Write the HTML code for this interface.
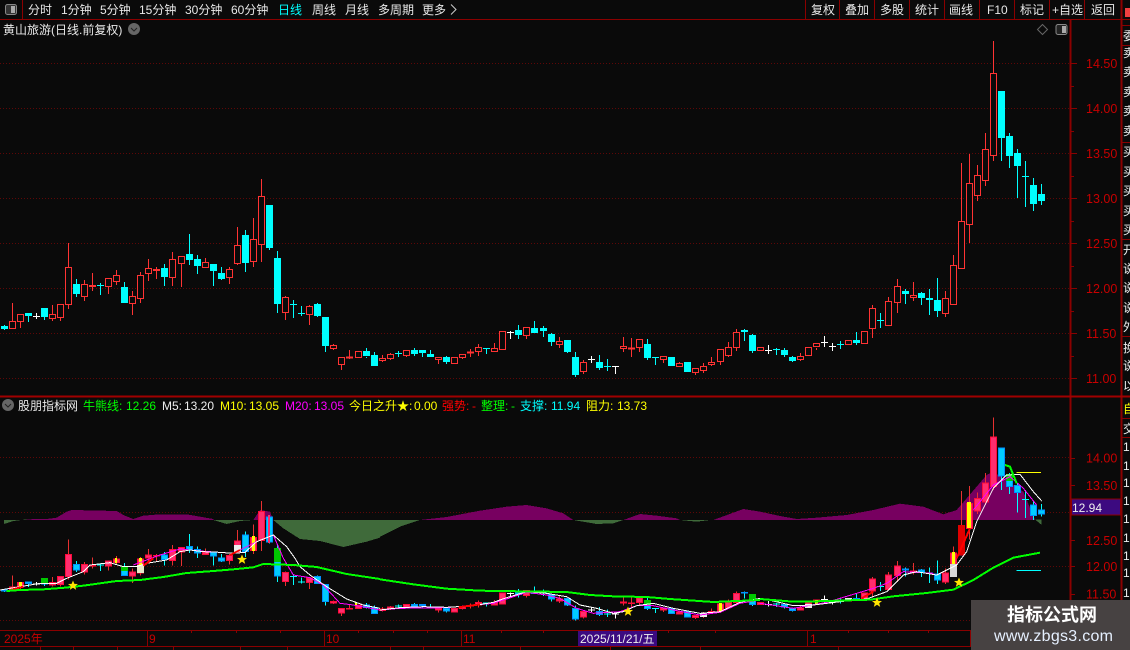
<!DOCTYPE html>
<html lang="zh">
<head>
<meta charset="utf-8">
<title>黄山旅游</title>
<style>
html,body{margin:0;padding:0;background:#0a0a0a;width:1130px;height:650px;overflow:hidden}
svg{display:block;position:absolute;left:0;top:0}
text{font-family:"Liberation Sans","WenQuanYi Zen Hei","Noto Sans CJK SC",sans-serif;font-size:12px;white-space:pre}
.n{fill:#e8e8e8}
.a{fill:#c80000;font-size:12.5px}
.d{stroke:#5e0707;stroke-width:1;stroke-dasharray:1 2;fill:none}
.s{stroke:#8b0000;stroke-width:1;fill:none}
.ln{fill:none;vector-effect:non-scaling-stroke;shape-rendering:crispEdges}
.c{vector-effect:non-scaling-stroke}
g[transform] polygon{shape-rendering:crispEdges}
</style>
</head>
<body>
<svg width="1130" height="650" viewBox="0 0 1130 650" xmlns="http://www.w3.org/2000/svg">
<defs>
<path id="rw" class="c" d="M12.5 303V321M20.5 322V328M52.5 305V314M52.5 319V321M60.5 318V321M68.5 243V267M68.5 305V309M84.5 280V284M84.5 297V301M92.5 273V291M108.5 287V294M116.5 270V275M116.5 282V285M132.5 291V296M132.5 304V315M140.5 272V275M140.5 299V303M148.5 259V268M148.5 274V281M156.5 267V279M172.5 252V259M172.5 278V286M181.5 264V287M205.5 258V262M229.5 267V269M229.5 278V284M237.5 227V245M237.5 264V265M253.5 218V239M253.5 262V267M261.5 179V196M261.5 245V262M285.5 296V297M285.5 313V320M309.5 305V306M309.5 315V325M333.5 344V345M333.5 349V350M341.5 365V370M349.5 350V359M382.5 355V358M382.5 361V362M390.5 353V354M390.5 359V360M406.5 355V357M438.5 360V364M462.5 358V359M470.5 349V357M478.5 344V347M478.5 352V356M494.5 343V348M526.5 336V339M559.5 337V341M559.5 345V348M583.5 360V362M583.5 372V374M623.5 337V346M623.5 349V352M631.5 338V357M639.5 347V352M663.5 359V363M679.5 362V363M695.5 373V375M703.5 363V366M703.5 371V373M711.5 357V362M711.5 364V366M720.5 362V365M728.5 342V347M728.5 356V357M736.5 329V332M736.5 348V351M800.5 353V356M800.5 360V361M816.5 348V350M872.5 305V308M872.5 329V338M888.5 297V301M897.5 279V286M897.5 303V313M913.5 282V295M913.5 298V301M945.5 291V298M945.5 314V317M953.5 255V265M961.5 163V221M969.5 154V183M969.5 225V243M977.5 165V175M977.5 196V201M985.5 133V149M985.5 181V186M993.5 41V73M993.5 156V161"/>
<path id="rb" class="c" d="M9.5 321.5h6v7h-6zM17.5 314.5h6v7h-6zM49.5 314.5h6v4h-6zM57.5 304.5h6v13h-6zM65.5 267.5h6v37h-6zM81.5 284.5h6v12h-6zM89.5 285.5h6v1h-6zM105.5 278.5h6v8h-6zM113.5 275.5h6v6h-6zM129.5 296.5h6v7h-6zM137.5 275.5h6v23h-6zM145.5 268.5h6v5h-6zM153.5 269.5h6v1h-6zM169.5 259.5h6v18h-6zM178.5 256.5h6v7h-6zM202.5 262.5h6v5h-6zM226.5 269.5h6v8h-6zM234.5 245.5h6v18h-6zM250.5 239.5h6v22h-6zM258.5 196.5h6v48h-6zM282.5 297.5h6v15h-6zM306.5 306.5h6v8h-6zM330.5 345.5h6v3h-6zM338.5 357.5h6v7h-6zM346.5 357h6v1h-6zM355.5 351.5h6v6h-6zM379.5 358.5h6v2h-6zM387.5 354.5h6v4h-6zM403.5 350.5h6v5h-6zM435.5 357.5h6v2h-6zM451.5 357.5h6v6h-6zM459.5 354.5h6v3h-6zM467.5 352h6v1h-6zM475.5 347.5h6v4h-6zM491.5 348.5h6v3h-6zM499.5 331.5h6v18h-6zM523.5 327.5h6v8h-6zM556.5 341.5h6v3h-6zM580.5 362.5h6v9h-6zM620.5 346.5h6v2h-6zM628.5 348h6v1h-6zM636.5 339.5h6v8h-6zM660.5 356.5h6v3h-6zM676.5 363.5h6v3h-6zM692.5 368.5h6v4h-6zM700.5 366.5h6v4h-6zM708.5 362.5h6v2h-6zM717.5 349.5h6v12h-6zM725.5 347.5h6v8h-6zM733.5 332.5h6v15h-6zM757.5 347.5h6v3h-6zM797.5 356.5h6v3h-6zM805.5 347.5h6v8h-6zM813.5 343.5h6v3h-6zM845.5 340.5h6v4h-6zM861.5 331.5h6v12h-6zM869.5 308.5h6v20h-6zM885.5 301.5h6v24h-6zM894.5 286.5h6v16h-6zM910.5 295.5h6v2h-6zM942.5 298.5h6v15h-6zM950.5 265.5h6v39h-6zM958.5 221.5h6v47h-6zM966.5 183.5h6v41h-6zM974.5 175.5h6v20h-6zM982.5 149.5h6v31h-6zM990.5 73.5h6v82h-6z"/>
<path id="cw" class="c" d="M4.5 325V330M28.5 316V322M44.5 317V320M76.5 279V284M76.5 294V297M100.5 283V295M97 285.5h7M124.5 282V287M164.5 264V268M164.5 277V286M189.5 234V254M189.5 259V265M197.5 255V259M197.5 266V274M213.5 271V286M221.5 267V273M221.5 279V280M245.5 230V235M245.5 263V272M269.5 248V250M277.5 251V258M277.5 304V313M293.5 300V318M290 304.5h7M301.5 306V316M298 313.5h7M317.5 303V304M317.5 316V317M325.5 346V352M366.5 348V351M366.5 357V358M374.5 352V355M398.5 351V357M395 353.5h7M414.5 348V350M414.5 354V356M422.5 350V351M422.5 353V357M430.5 350V354M446.5 356V357M446.5 362V364M486.5 348V354M483 348.5h7M518.5 325V330M518.5 335V339M534.5 321V328M543.5 326V328M543.5 331V337M551.5 333V334M551.5 342V346M567.5 352V353M575.5 352V357M575.5 375V377M599.5 355V362M599.5 368V370M607.5 359V371M604 366.5h7M647.5 339V344M647.5 358V360M655.5 357V365M652 357.5h7M744.5 329V341M752.5 334V335M752.5 351V353M776.5 348V355M773 349.5h7M784.5 348V350M784.5 355V357M792.5 356V357M792.5 361V362M840.5 341V349M837 344.5h7M856.5 332V340M856.5 343V345M880.5 313V328M877 320.5h7M905.5 289V292M905.5 294V304M921.5 292V293M921.5 298V305M929.5 289V298M929.5 300V315M937.5 278V300M937.5 311V317M1001.5 138V161M1009.5 133V136M1009.5 156V168M1017.5 149V153M1017.5 166V198M1025.5 161V207M1022 176.5h7M1033.5 178V185M1033.5 204V211M1041.5 184V194M1041.5 201V205"/>
<path id="cb" class="c" d="M1.5 326.5h6v2h-6zM25.5 313.5h6v2h-6zM41.5 308.5h6v8h-6zM73.5 284.5h6v9h-6zM121.5 287.5h6v15h-6zM161.5 268.5h6v8h-6zM186.5 254.5h6v5h-6zM194.5 259.5h6v6h-6zM210.5 264.5h6v6h-6zM218.5 273.5h6v5h-6zM242.5 235.5h6v27h-6zM266.5 205.5h6v42h-6zM274.5 258.5h6v45h-6zM314.5 304.5h6v11h-6zM322.5 317.5h6v28h-6zM363.5 351.5h6v4h-6zM371.5 355.5h6v10h-6zM411.5 350.5h6v3h-6zM419.5 350.5h6v2h-6zM427.5 354.5h6v2h-6zM443.5 357.5h6v4h-6zM515.5 330.5h6v4h-6zM531.5 328.5h6v4h-6zM540.5 328.5h6v2h-6zM548.5 334.5h6v7h-6zM564.5 340.5h6v11h-6zM572.5 357.5h6v17h-6zM596.5 362.5h6v5h-6zM644.5 344.5h6v13h-6zM668.5 357.5h6v8h-6zM684.5 362.5h6v9h-6zM741.5 330.5h6v1h-6zM749.5 335.5h6v15h-6zM781.5 350.5h6v4h-6zM789.5 357.5h6v3h-6zM853.5 340.5h6v2h-6zM902.5 291.5h6v2h-6zM918.5 293.5h6v4h-6zM926.5 298.5h6v1h-6zM934.5 300.5h6v10h-6zM998.5 91.5h6v46h-6zM1006.5 136.5h6v19h-6zM1014.5 153.5h6v12h-6zM1030.5 185.5h6v18h-6zM1038.5 194.5h6v6h-6z"/>
<path id="ww" class="c" d="M36.5 313V319M33 316.5h7M510.5 331V339M507 332.5h7M591.5 356V363M588 359.5h7M615.5 366V374M612 366.5h7M768.5 345V354M765 350.5h7M824.5 336V347M821 342.5h7M832.5 343V351M829 346.5h7"/>
<polygon id="star" points="0,-5 1.4,-1.6 5,-1.5 2.2,.8 3.2,4.4 0,2.3 -3.2,4.4 -2.2,.8 -5,-1.5 -1.4,-1.6"/>
</defs>

<rect width="1130" height="650" fill="#0a0a0a"/>

<!-- top nav -->
<path class="s" shape-rendering="crispEdges" d="M0 19.5H1130M22.5 0V19M805.5 0V19M839.5 0V19M874.5 0V19M909.5 0V19M944.5 0V19M979.5 0V19M1014.5 0V19M1049.5 0V19M1084.5 0V19M1121.5 0V19"/>
<rect x="5.5" y="4.5" width="11" height="10" rx="2" fill="#333" stroke="#888"/><rect x="11" y="6" width="4" height="7" fill="#aaa"/>
<text class="n" x="28" y="14">分时</text>
<text class="n" x="61" y="14">1分钟</text>
<text class="n" x="100" y="14">5分钟</text>
<text class="n" x="139" y="14">15分钟</text>
<text class="n" x="185" y="14">30分钟</text>
<text class="n" x="231" y="14">60分钟</text>
<text x="278" y="14" fill="#00ffff">日线</text>
<text class="n" x="312" y="14">周线</text>
<text class="n" x="345" y="14">月线</text>
<text class="n" x="378" y="14">多周期</text>
<text class="n" x="422" y="14">更多</text>
<path d="M451 4.5L456 9.5L451 14.5" fill="none" stroke="#ccc"/>
<text class="n" x="811" y="14">复权</text>
<text class="n" x="845" y="14">叠加</text>
<text class="n" x="880" y="14">多股</text>
<text class="n" x="915" y="14">统计</text>
<text class="n" x="949" y="14">画线</text>
<text class="n" x="987" y="14">F10</text>
<text class="n" x="1020" y="14">标记</text>
<text class="n" x="1052" y="14">+自选</text>
<text class="n" x="1091" y="14">返回</text>
<rect x="1125" y="8" width="5" height="9" fill="#f04040"/>

<!-- upper header -->
<text class="n" x="3" y="34">黄山旅游(日线.前复权)</text>
<circle cx="134" cy="29" r="6" fill="#666"/><path d="M131 28l3 3 3-3" fill="none" stroke="#222"/>
<path d="M1042.5 24.5l5 5-5 5-5-5z" fill="none" stroke="#666"/>
<rect x="1056" y="24.5" width="11" height="10" rx="2" fill="#222" stroke="#888"/><rect x="1062" y="26" width="4" height="7" fill="#aaa"/>

<!-- dotted grids -->
<g class="d" shape-rendering="crispEdges">
<path d="M0 63.5H1070M0 108.5H1070M0 153.5H1070M0 198.5H1070M0 243.5H1070M0 288.5H1070M0 333.5H1070M0 378.5H1070M0 457.5H1070M0 512.5H1070M0 566.5H1070M0 620.5H1070"/>
</g>

<!-- upper candles -->
<g shape-rendering="crispEdges" fill="none" stroke-width="1">
<use href="#rw" stroke="#ff3333"/>
<use href="#rb" stroke="#ff3333" fill="#0a0a0a"/>
<use href="#cw" stroke="#00ffff"/>
<use href="#cb" stroke="#00ffff" fill="#00ffff"/>
<use href="#ww" stroke="#ffffff"/>
</g>

<!-- panel lines -->
<path shape-rendering="crispEdges" d="M0 396.5H1130" stroke="#a00000" stroke-width="2" fill="none"/>

<!-- indicator header -->
<circle cx="8" cy="405" r="6" fill="#666"/><path d="M5 404l3 3 3-3" fill="none" stroke="#222"/>
<text class="n" x="18" y="410">股朋指标网</text>
<text x="83" y="410" fill="#00ff00">牛熊线:</text><text x="126" y="410" fill="#00ff00">12.26</text>
<text x="162" y="410" fill="#eee">M5:</text><text x="184" y="410" fill="#eee">13.20</text>
<text x="220" y="410" fill="#ffff00">M10:</text><text x="249" y="410" fill="#ffff00">13.05</text>
<text x="285" y="410" fill="#ff00ff">M20:</text><text x="314" y="410" fill="#ff00ff">13.05</text>
<text x="349" y="410" fill="#ffff00">今日之升★:</text><text x="414" y="410" fill="#ffff00">0.00</text>
<text x="442" y="410" fill="#ff0000">强势:</text><text x="472" y="410" fill="#ff0000">-</text>
<text x="481" y="410" fill="#00ff00">整理:</text><text x="511" y="410" fill="#00ff00">-</text>
<text x="520" y="410" fill="#00ffff">支撑:</text><text x="551" y="410" fill="#00ffff">11.94</text>
<text x="586" y="410" fill="#ffff00">阻力:</text><text x="617" y="410" fill="#ffff00">13.73</text>

<!-- area histogram -->
<g transform="translate(0 395) scale(.33333)">
<polygon fill="#3f6a3a" points="12,375 12,387 40,378 80,373 80,375"/>
<polygon fill="#770060" points="80,375 80,373 140,372 170,368 200,350 215,345 350,348 370,360 400,372 430,362 480,358 560,358 640,372 640,375"/>
<polygon fill="#3f6a3a" points="640,375 680,387 720,378 760,375"/>
<polygon fill="#770060" points="760,375 780,345 810,350 820,375"/>
<polygon fill="#3f6a3a" points="820,375 850,400 900,432 960,438 1030,456 1100,440 1140,428 1140,375"/>
</g>
<g transform="translate(380 395) scale(.33333)">
<polygon fill="#3f6a3a" points="0,375 0,425 60,395 120,375"/>
<polygon fill="#770060" points="120,375 200,366 300,347 380,335 440,330 500,340 550,355 580,375"/>
<polygon fill="#3f6a3a" points="580,375 650,387 700,385 730,375"/>
<polygon fill="#770060" points="730,375 780,357 830,362 890,370 900,375"/>
<polygon fill="#3f6a3a" points="900,375 950,380 990,375"/>
<polygon fill="#770060" points="1000,375 1090,342 1140,350 1140,375"/>
</g>
<g transform="translate(760 395) scale(.33333)">
<polygon fill="#770060" points="0,375 0,350 60,363 110,372 170,368 260,360 340,345 420,326 490,335 550,358 590,345 680,240 700,230 790,290 825,375"/>
<polygon fill="#3f6a3a" points="825,373 845,373 845,390"/>
</g>

<!-- lower candles -->
<g shape-rendering="crispEdges" fill="none" transform="translate(0 392.8) scale(1 .6037)">
<use href="#rw" stroke="#e83030"/>
<use href="#cw" stroke="#00ffff"/>
<use href="#ww" stroke="#ffffff"/>
<use href="#rb" stroke="#ff0a3a" fill="#ff2d6e"/>
<use href="#cb" stroke="#0090ff" fill="#00ccff"/>
</g>

<!-- candle colour overlays -->
<g shape-rendering="crispEdges">
<rect x="19" y="582" width="3" height="5" fill="#ffff00"/>
<rect x="41" y="578" width="7" height="5" fill="#00c800"/>
<rect x="121" y="566" width="7" height="5" fill="#00c800"/>
<rect x="139" y="558" width="3" height="7" fill="#ffff00"/>
<rect x="137" y="565" width="7" height="8" fill="#e8e8c8"/>
<rect x="115" y="558" width="2" height="5" fill="#ffff00"/>
<rect x="234" y="545" width="7" height="7" fill="#eeeeee"/>
<rect x="252" y="536" width="3" height="15" fill="#ffff00"/>
<rect x="274" y="548" width="7" height="14" fill="#00c800"/>
<rect x="268" y="515" width="2" height="28" fill="#ff2d6e"/>
<rect x="355" y="602" width="2" height="4" fill="#ffff00"/>
<rect x="719" y="603" width="3" height="8" fill="#ffff00"/>
<rect x="749" y="594" width="7" height="6" fill="#00c800"/>
<rect x="644" y="600" width="7" height="5" fill="#00c800"/>
<rect x="700" y="613" width="7" height="4" fill="#eeeeee"/>
<rect x="805" y="604" width="7" height="4" fill="#eeeeee"/>
<rect x="815" y="600" width="3" height="4" fill="#ffff00"/>
<rect x="845" y="598" width="7" height="2" fill="#eeeeee"/>
<rect x="952" y="552" width="3" height="12" fill="#ffff00"/>
<rect x="950" y="564" width="7" height="13" fill="#d8d8d8"/>
<rect x="958" y="525" width="7" height="30" fill="#e00000"/>
<rect x="967" y="502" width="4" height="26" fill="#ffff00"/>
<rect x="1006" y="474" width="7" height="7" fill="#00c800"/>
</g>

<!-- lines -->
<g transform="translate(0 395) scale(.33333)">
<polyline class="ln" stroke="#ff00ff" stroke-width="1" points="400,510 440,495 480,480 540,462 600,468 700,475 770,440 820,420 850,490 880,540 930,548 970,570 1020,625 1060,630 1140,645"/>
<polyline class="ln" stroke="#ffffff" stroke-width="1" points="0,585 60,575 120,565 170,565 200,550 250,530 270,510 330,503 370,515 410,515 440,505 500,495 540,470 570,465 610,470 660,472 700,475 735,472 770,440 820,420 860,455 885,490 900,515 930,540 980,575 1040,612 1090,630 1140,640"/>
<polyline class="ln" stroke="#ff0000" stroke-width="2" points="30,585 70,575"/>
<polyline class="ln" stroke="#ff0000" stroke-width="2" points="430,512 460,490"/>
<polyline class="ln" stroke="#ff0000" stroke-width="2" points="690,480 720,465"/>
<polyline class="ln" stroke="#00ff00" stroke-width="2" points="20,588 60,585 130,583 195,578 250,572 300,565 350,558 420,555 490,546 560,534 640,528 700,523 760,517 790,507 880,510 950,516 1040,537 1140,552"/>
</g>
<g transform="translate(380 395) scale(.33333)">
<polyline class="ln" stroke="#ff00ff" stroke-width="1" points="0,645 60,640 200,638 340,625 440,592 500,600 540,610 590,640 640,655 720,650 770,632 820,632 880,645 960,660 1020,652 1080,625 1140,615"/>
<polyline class="ln" stroke="#ffffff" stroke-width="1" points="0,645 60,638 130,635 200,637 280,632 340,622 380,608 440,590 500,595 560,605 600,630 650,640 700,655 730,650 770,632 820,625 880,640 960,655 1020,650 1080,622 1140,610"/>
<polyline class="ln" stroke="#ff0000" stroke-width="2" points="235,637 300,628"/>
<polyline class="ln" stroke="#00ff00" stroke-width="2" points="0,553 100,568 200,581 300,587 420,589 560,591 630,600 700,604 800,606 870,612 1000,621 1140,615"/>
</g>
<g transform="translate(760 395) scale(.33333)">
<polyline class="ln" stroke="#ff00ff" stroke-width="1" points="0,625 100,640 200,622 340,580 380,565 430,530 520,535"/>
<polyline class="ln" stroke="#ff00ff" stroke-width="1" points="640,345 700,270 750,245 790,280 830,330"/>
<polyline class="ln" stroke="#ffffff" stroke-width="1" points="0,610 40,618 100,632 160,630 240,620 320,612 380,590 430,540 470,530 530,540 590,510 620,470 650,380 700,280 740,240 780,238 820,290 845,318"/>
<polyline class="ln" stroke="#ff0000" stroke-width="2" points="305,610 340,590"/>
<polyline class="ln" stroke="#ff0000" stroke-width="2" points="590,490 630,400"/>
<polyline class="ln" stroke="#00ff00" stroke-width="2" points="0,612 100,620 135,620 330,614 400,604 500,594 580,584 640,555 700,518 760,488 840,473"/>
<polyline class="ln" stroke="#00ff00" stroke-width="2" points="735,210 750,215 770,265"/>
<polyline class="ln" stroke="#ffff00" stroke-width="1" points="770,232 843,232"/>
<polyline class="ln" stroke="#00ffff" stroke-width="1" points="770,526 843,526"/>
</g>
<g fill="#ffe400">
<use href="#star" x="73" y="585.5"/>
<use href="#star" x="242" y="559.5"/>
<use href="#star" x="628" y="611.5"/>
<use href="#star" x="877" y="602.5"/>
<use href="#star" x="959" y="582.5"/>
</g>

<!-- bottom time axis -->
<rect x="0" y="631" width="1121" height="15" fill="#0a0a0a"/>
<path class="s" shape-rendering="crispEdges" d="M0 630.5H1121M0 646.5H1121M147.5 631V646M324.5 631V646M461.5 631V646M807.5 631V646M970.5 631V646M191.5 631V633M236.5 631V633M280.5 631V633M358.5 631V633M393.5 631V633M427.5 631V633M501.5 631V633M543.5 631V633M668.5 631V633M715.5 631V633M848.5 631V633M888.5 631V633M928.5 631V633M40.5 647V650M73.5 647V650M117.5 647V650M173.5 647V650M240.5 647V650M287.5 647V650M390.5 647V650M423.5 647V650M520.5 647V650M610.5 647V650M700.5 647V650M838.5 647V650"/>
<text x="4" y="643" fill="#c80000">2025年</text>
<text x="149" y="643" fill="#c80000">9</text>
<text x="326" y="643" fill="#c80000">10</text>
<text x="463" y="643" fill="#c80000">11</text>
<text x="810" y="643" fill="#c80000">1</text>
<rect x="578" y="631" width="79" height="15" fill="#3c0a80"/>
<text x="580" y="643" fill="#eee">2025/11/21/五</text>

<!-- price axis -->
<rect x="1072" y="20" width="49" height="630" fill="#0a0a0a"/>
<path d="M1070.5 20V650" stroke="#8b0000" stroke-width="2" fill="none" shape-rendering="crispEdges"/>
<path d="M1121.5 0V650" stroke="#8b0000" stroke-width="2" fill="none" shape-rendering="crispEdges"/>
<path class="s" shape-rendering="crispEdges" d="M1071 63.5h6M1071 86.5h3M1071 108.5h6M1071 131.5h3M1071 153.5h6M1071 176.5h3M1071 198.5h6M1071 221.5h3M1071 243.5h6M1071 266.5h3M1071 288.5h6M1071 311.5h3M1071 333.5h6M1071 356.5h3M1071 378.5h6M1071 458.5h4M1071 485.5h4M1071 540.5h4M1071 566.5h4M1071 594.5h4"/>
<path d="M0 396.5H1130" stroke="#a00000" stroke-width="2" fill="none" shape-rendering="crispEdges"/>
<text class="a" x="1086" y="68">14.50</text>
<text class="a" x="1086" y="113">14.00</text>
<text class="a" x="1086" y="158">13.50</text>
<text class="a" x="1086" y="203">13.00</text>
<text class="a" x="1086" y="248">12.50</text>
<text class="a" x="1086" y="293">12.00</text>
<text class="a" x="1086" y="338">11.50</text>
<text class="a" x="1086" y="383">11.00</text>
<text class="a" x="1086" y="462.500">14.00</text>
<text class="a" x="1086" y="490">13.50</text>
<text class="a" x="1086" y="545">12.50</text>
<text class="a" x="1086" y="571">12.00</text>
<text class="a" x="1086" y="598.500">11.50</text>
<rect x="1071.500" y="499" width="49" height="16" fill="#3c0a80" stroke="#8b0000"/>
<text x="1072" y="512" fill="#eee">12.94</text>

<!-- right clipped strip -->
<svg x="1122" y="20" width="8" height="630" viewBox="1122 20 8 630">
<g fill="#eee">
<text x="1123" y="40">委</text>
<text x="1123" y="57">卖</text><text x="1123" y="76">卖</text><text x="1123" y="96">卖</text><text x="1123" y="115">卖</text><text x="1123" y="135">卖</text>
<text x="1123" y="156">买</text><text x="1123" y="176">买</text><text x="1123" y="195">买</text><text x="1123" y="215">买</text><text x="1123" y="234">买</text>
<text x="1123" y="254">开</text><text x="1123" y="273">说</text><text x="1123" y="292">说</text><text x="1123" y="312">说</text><text x="1123" y="331">外</text>
<text x="1123" y="352">换</text><text x="1123" y="370">说</text><text x="1123" y="390">以</text>
<text x="1123" y="413" fill="#ffff00">自</text>
<text x="1123" y="433">交</text>
<text x="1123" y="451">1</text><text x="1123" y="470">1</text><text x="1123" y="487">1</text><text x="1123" y="505">1</text><text x="1123" y="523">1</text><text x="1123" y="542">1</text><text x="1123" y="560">1</text><text x="1123" y="577">1</text><text x="1123" y="597">1</text>
</g>
<path class="s" shape-rendering="crispEdges" d="M1122 25.500H1130M1122 45.500H1130M1122 142.500H1130M1122 239.500H1130M1122 336.500H1130M1122 418.500H1130M1122 437.500H1130"/>
</svg>

<!-- watermark -->
<rect x="971" y="600" width="159" height="50" fill="#474242"/>
<text x="1007" y="621" fill="#fff" style="font-size:18px;font-weight:bold">指标公式网</text>
<text x="994" y="641" fill="#e6f0ff" style="font-size:16px" textLength="119" lengthAdjust="spacing">www.zbgs3.com</text>
</svg>
</body>
</html>
